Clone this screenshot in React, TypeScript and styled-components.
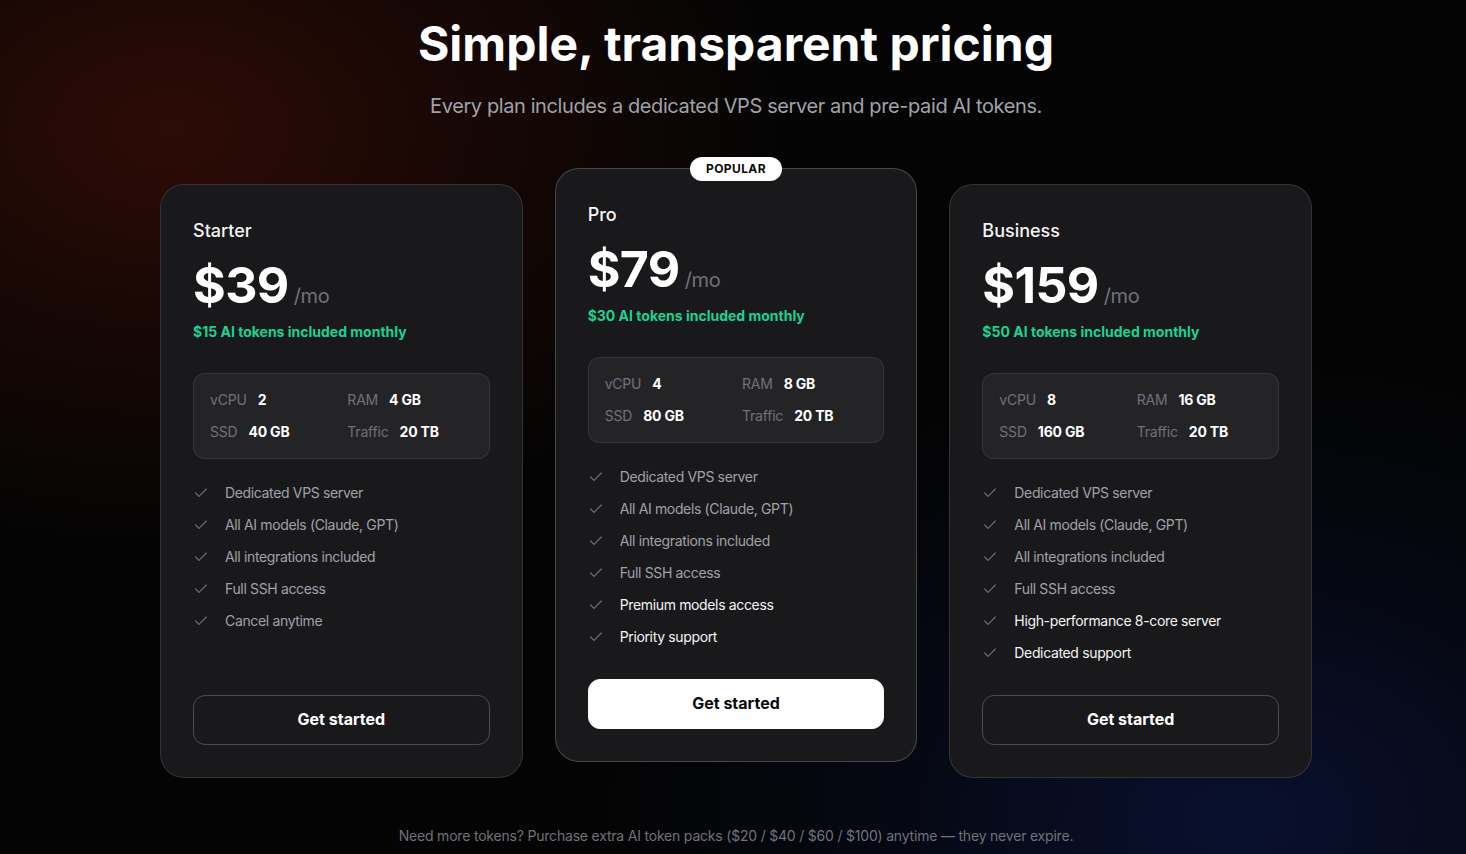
import React from "react";
import styled, { createGlobalStyle, css } from "styled-components";

const Global = createGlobalStyle`
  html, body { margin: 0; padding: 0; }
  body {
    background: #040404;
    font-family: Inter, "Noto Sans", sans-serif;
    color: #fafafa;
    -webkit-font-smoothing: antialiased;
  }
  * { box-sizing: border-box; }
`;

const Page = styled.main`
  position: relative;
  min-height: 854px;
  overflow: hidden;
  padding: 15px 0 0 6px;
  background:
    radial-gradient(ellipse 620px 420px at 170px 130px, rgba(48, 12, 6, 0.95), rgba(34, 9, 5, 0.6) 50%, transparent 100%),
    radial-gradient(ellipse 640px 460px at 1240px 820px, rgba(10, 18, 52, 0.9), rgba(7, 12, 34, 0.55) 50%, transparent 100%),
    #040404;
  display: flex;
  flex-direction: column;
  align-items: center;
`;

const Title = styled.h1`
  margin: 0;
  font-size: 48px;
  line-height: 58px;
  font-weight: 700;
  letter-spacing: 0;
  color: #ffffff;
  text-align: center;
`;

const Subtitle = styled.p`
  margin: 19px 0 0;
  font-size: 20px;
  line-height: 28px;
  letter-spacing: -0.4px;
  color: #a1a1aa;
  text-align: center;
`;

const Grid = styled.div`
  margin-top: 64px;
  width: 1152px;
  display: grid;
  grid-template-columns: repeat(3, 1fr);
  gap: 32px;
  align-items: stretch;
`;

const Card = styled.div<{ $featured?: boolean }>`
  position: relative;
  display: flex;
  flex-direction: column;
  padding: 32px;
  background: #19191b;
  border: 1px solid rgba(255, 255, 255, 0.12);
  border-radius: 24px;
  ${(p) =>
    p.$featured &&
    css`
      transform: translateY(-16px);
      border-color: rgba(255, 255, 255, 0.2);
    `}
`;

const Badge = styled.span`
  position: absolute;
  top: -12px;
  left: 50%;
  transform: translateX(-50%);
  background: #ffffff;
  color: #0a0a0a;
  font-size: 12px;
  font-weight: 700;
  letter-spacing: 0.4px;
  line-height: 16px;
  padding: 4px 16px;
  border-radius: 999px;
`;

const PlanName = styled.h3`
  margin: 0;
  font-size: 18px;
  line-height: 28px;
  font-weight: 500;
  color: #f4f4f5;
`;

const PriceRow = styled.div`
  margin-top: 16px;
  display: flex;
  align-items: baseline;
  gap: 5px;
  height: 48px;
`;

const Price = styled.span`
  font-size: 50px;
  line-height: 48px;
  font-weight: 700;
  letter-spacing: -0.6px;
  color: #ffffff;
`;

const Per = styled.span`
  font-size: 20px;
  letter-spacing: -0.3px;
  color: #71717a;
`;

const Tokens = styled.p`
  margin: 13px 0 0;
  font-size: 14px;
  line-height: 20px;
  font-weight: 700;
  color: #19d38f;
`;

const Specs = styled.div`
  margin-top: 31px;
  display: grid;
  grid-template-columns: 1fr 1fr;
  column-gap: 12px;
  row-gap: 12px;
  padding: 16px;
  background: #242427;
  border: 1px solid rgba(255, 255, 255, 0.08);
  border-radius: 12px;
`;

const Spec = styled.div`
  display: flex;
  align-items: center;
  gap: 11px;
  font-size: 14px;
  line-height: 20px;
`;

const SpecLabel = styled.span`
  color: #71717a;
  letter-spacing: -0.2px;
`;

const SpecValue = styled.span`
  color: #ffffff;
  font-weight: 700;
  letter-spacing: -0.2px;
`;

const Features = styled.ul`
  list-style: none;
  margin: 24px 0 32px;
  padding: 0;
  display: flex;
  flex-direction: column;
  gap: 12px;
  flex: 1;
`;

const Feature = styled.li<{ $highlight?: boolean }>`
  display: flex;
  align-items: center;
  gap: 16px;
  font-size: 14px;
  line-height: 20px;
  letter-spacing: -0.35px;
  color: ${(p) => (p.$highlight ? "#f4f4f5" : "#a1a1aa")};
  svg { flex: none; }
`;

const Button = styled.button<{ $primary?: boolean }>`
  height: 50px;
  width: 100%;
  padding: 0 0 2px;
  border-radius: 12px;
  font-family: inherit;
  font-size: 16px;
  font-weight: 700;
  cursor: pointer;
  ${(p) =>
    p.$primary
      ? css`
          background: #ffffff;
          color: #0a0a0a;
          border: 1px solid #ffffff;
        `
      : css`
          background: transparent;
          color: #ffffff;
          border: 1px solid rgba(255, 255, 255, 0.22);
        `}
`;

const Footnote = styled.p`
  margin: 48px 0 0;
  font-size: 14px;
  line-height: 20px;
  letter-spacing: -0.2px;
  color: #71717a;
  text-align: center;
`;

const CheckIcon = () => (
  <svg width="16" height="16" viewBox="0 0 24 24" fill="none" stroke="#6b6b75" strokeWidth="1.8" strokeLinecap="round" strokeLinejoin="round">
    <path d="M20 6 9 17l-5-5" />
  </svg>
);

type Plan = {
  name: string;
  price: string;
  tokens: string;
  specs: [string, string][];
  features: string[];
  extra: string[];
  featured?: boolean;
};

const base = ["Dedicated VPS server", "All AI models (Claude, GPT)", "All integrations included", "Full SSH access"];

const plans: Plan[] = [
  {
    name: "Starter",
    price: "$39",
    tokens: "$15 AI tokens included monthly",
    specs: [["vCPU", "2"], ["RAM", "4 GB"], ["SSD", "40 GB"], ["Traffic", "20 TB"]],
    features: [...base, "Cancel anytime"],
    extra: [],
  },
  {
    name: "Pro",
    price: "$79",
    tokens: "$30 AI tokens included monthly",
    specs: [["vCPU", "4"], ["RAM", "8 GB"], ["SSD", "80 GB"], ["Traffic", "20 TB"]],
    features: base,
    extra: ["Premium models access", "Priority support"],
    featured: true,
  },
  {
    name: "Business",
    price: "$159",
    tokens: "$50 AI tokens included monthly",
    specs: [["vCPU", "8"], ["RAM", "16 GB"], ["SSD", "160 GB"], ["Traffic", "20 TB"]],
    features: base,
    extra: ["High-performance 8-core server", "Dedicated support"],
  },
];

export default function App() {
  return (
    <>
      <Global />
      <Page>
        <Title>Simple, transparent pricing</Title>
        <Subtitle>Every plan includes a dedicated VPS server and pre-paid AI tokens.</Subtitle>
        <Grid>
          {plans.map((p) => (
            <Card key={p.name} $featured={p.featured}>
              {p.featured && <Badge>POPULAR</Badge>}
              <PlanName>{p.name}</PlanName>
              <PriceRow>
                <Price>{p.price}</Price>
                <Per>/mo</Per>
              </PriceRow>
              <Tokens>{p.tokens}</Tokens>
              <Specs>
                {p.specs.map(([l, v]) => (
                  <Spec key={l}>
                    <SpecLabel>{l}</SpecLabel>
                    <SpecValue>{v}</SpecValue>
                  </Spec>
                ))}
              </Specs>
              <Features>
                {p.features.map((f) => (
                  <Feature key={f}>
                    <CheckIcon />
                    {f}
                  </Feature>
                ))}
                {p.extra.map((f) => (
                  <Feature key={f} $highlight>
                    <CheckIcon />
                    {f}
                  </Feature>
                ))}
              </Features>
              <Button $primary={p.featured}>Get started</Button>
            </Card>
          ))}
        </Grid>
        <Footnote>
          Need more tokens? Purchase extra AI token packs ($20 / $40 / $60 / $100) anytime — they never expire.
        </Footnote>
      </Page>
    </>
  );
}
